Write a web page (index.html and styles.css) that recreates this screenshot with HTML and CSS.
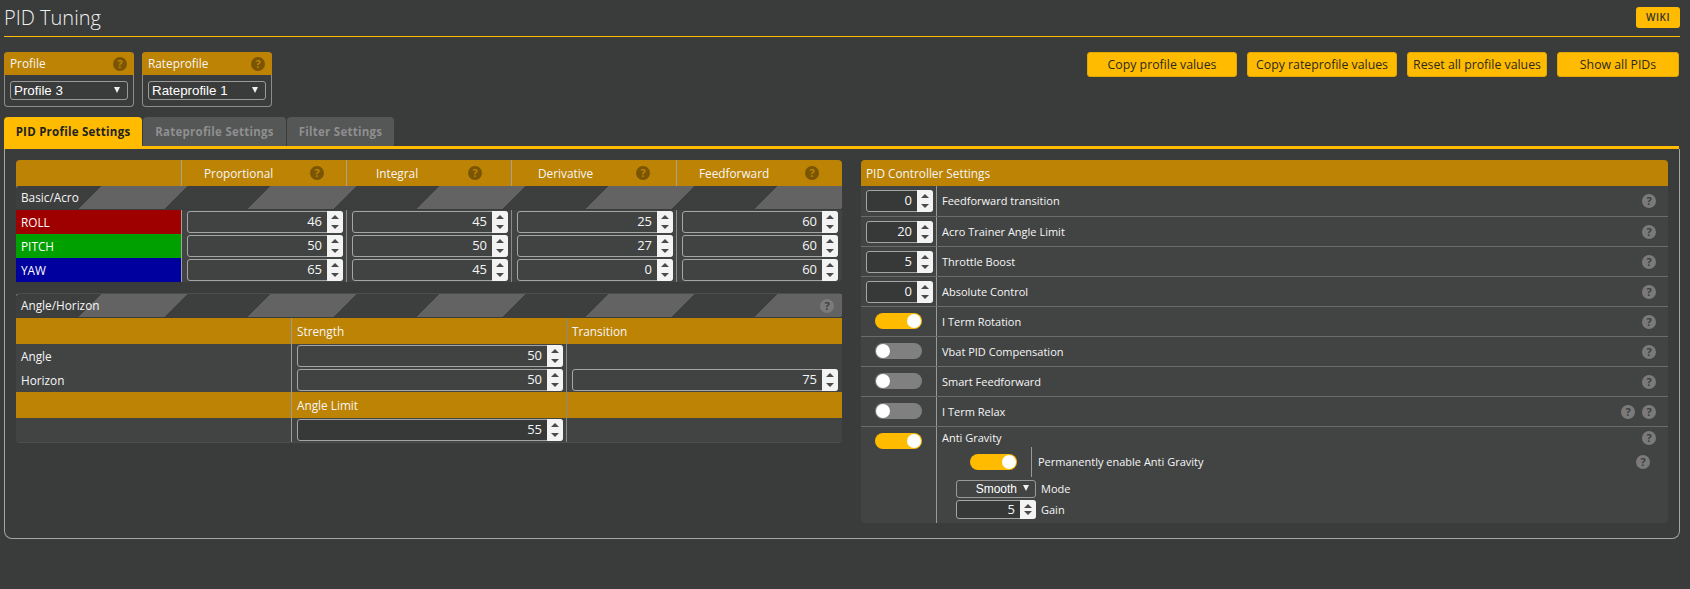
FILE: index.html
```html
<!DOCTYPE html>
<html lang="en">
<head>
<meta charset="utf-8">
<title>PID Tuning</title>
<link rel="stylesheet" href="styles.css">
</head>
<body>
<main class="page">
  <header class="title-bar">
    <h1 class="title">PID Tuning</h1>
    <a class="wiki">WIKI</a>
  </header>

  <section class="toolbar">
    <div class="profiles">
      <div class="profile-box">
        <div class="profile-head"><span>Profile</span><i class="help help-head">?</i></div>
        <div class="profile-body"><div class="select"><span>Profile 3</span></div></div>
      </div>
      <div class="profile-box">
        <div class="profile-head"><span>Rateprofile</span><i class="help help-head">?</i></div>
        <div class="profile-body"><div class="select"><span>Rateprofile 1</span></div></div>
      </div>
    </div>
    <div class="actions">
      <a class="btn btn-a">Copy profile values</a>
      <a class="btn btn-a">Copy rateprofile values</a>
      <a class="btn btn-a">Reset all profile values</a>
      <a class="btn btn-b">Show all PIDs</a>
    </div>
  </section>

  <nav class="tabs">
    <a class="tab tab-on">PID Profile Settings</a>
    <a class="tab tab-2">Rateprofile Settings</a>
    <a class="tab tab-3">Filter Settings</a>
  </nav>

  <section class="content">
    <div class="left">
      <div class="gui pid-table">
        <div class="pid-row pid-head">
          <div class="cell"></div>
          <div class="cell col-p"><span>Proportional</span><i class="help help-head">?</i></div>
          <div class="cell col-i"><span>Integral</span><i class="help help-head">?</i></div>
          <div class="cell col-d"><span>Derivative</span><i class="help help-head">?</i></div>
          <div class="cell col-f"><span>Feedforward</span><i class="help help-head">?</i></div>
        </div>
        <div class="strip"><span>Basic/Acro</span></div>
        <div class="pid-row">
          <div class="axis roll">ROLL</div>
          <div class="cell-in"><div class="num"><span>46</span><b class="spin"></b></div></div>
          <div class="cell-in"><div class="num"><span>45</span><b class="spin"></b></div></div>
          <div class="cell-in"><div class="num"><span>25</span><b class="spin"></b></div></div>
          <div class="cell-in"><div class="num"><span>60</span><b class="spin"></b></div></div>
        </div>
        <div class="pid-row">
          <div class="axis pitch">PITCH</div>
          <div class="cell-in"><div class="num"><span>50</span><b class="spin"></b></div></div>
          <div class="cell-in"><div class="num"><span>50</span><b class="spin"></b></div></div>
          <div class="cell-in"><div class="num"><span>27</span><b class="spin"></b></div></div>
          <div class="cell-in"><div class="num"><span>60</span><b class="spin"></b></div></div>
        </div>
        <div class="pid-row">
          <div class="axis yaw">YAW</div>
          <div class="cell-in"><div class="num"><span>65</span><b class="spin"></b></div></div>
          <div class="cell-in"><div class="num"><span>45</span><b class="spin"></b></div></div>
          <div class="cell-in"><div class="num"><span>0</span><b class="spin"></b></div></div>
          <div class="cell-in"><div class="num"><span>60</span><b class="spin"></b></div></div>
        </div>
      </div>

      <div class="gui angle-table">
        <div class="strip strip-angle"><span>Angle/Horizon</span><i class="help help-row">?</i></div>
        <div class="ang-row ang-head">
          <div class="ang-label"></div>
          <div class="ang-cell">Strength</div>
          <div class="ang-cell">Transition</div>
        </div>
        <div class="ang-row">
          <div class="ang-label">Angle</div>
          <div class="ang-cell"><div class="num"><span>50</span><b class="spin"></b></div></div>
          <div class="ang-cell"></div>
        </div>
        <div class="ang-row">
          <div class="ang-label">Horizon</div>
          <div class="ang-cell"><div class="num"><span>50</span><b class="spin"></b></div></div>
          <div class="ang-cell"><div class="num"><span>75</span><b class="spin"></b></div></div>
        </div>
        <div class="ang-row ang-head">
          <div class="ang-label"></div>
          <div class="ang-cell">Angle Limit</div>
          <div class="ang-cell"></div>
        </div>
        <div class="ang-row">
          <div class="ang-label"></div>
          <div class="ang-cell"><div class="num num-dark"><span>55</span><b class="spin"></b></div></div>
          <div class="ang-cell"></div>
        </div>
      </div>
    </div>

    <div class="gui right">
      <div class="right-head">PID Controller Settings</div>
      <div class="set-row set-first">
        <div class="set-ctl"><div class="num num-dark num-small"><span>0</span><b class="spin"></b></div></div>
        <div class="set-label"><span>Feedforward transition</span><i class="help help-row">?</i></div>
      </div>
      <div class="set-row">
        <div class="set-ctl"><div class="num num-dark num-small"><span>20</span><b class="spin"></b></div></div>
        <div class="set-label"><span>Acro Trainer Angle Limit</span><i class="help help-row">?</i></div>
      </div>
      <div class="set-row">
        <div class="set-ctl"><div class="num num-dark num-small"><span>5</span><b class="spin"></b></div></div>
        <div class="set-label"><span>Throttle Boost</span><i class="help help-row">?</i></div>
      </div>
      <div class="set-row">
        <div class="set-ctl"><div class="num num-dark num-small"><span>0</span><b class="spin"></b></div></div>
        <div class="set-label"><span>Absolute Control</span><i class="help help-row">?</i></div>
      </div>
      <div class="set-row">
        <div class="set-ctl"><b class="toggle toggle-on"></b></div>
        <div class="set-label"><span>I Term Rotation</span><i class="help help-row">?</i></div>
      </div>
      <div class="set-row">
        <div class="set-ctl"><b class="toggle"></b></div>
        <div class="set-label"><span>Vbat PID Compensation</span><i class="help help-row">?</i></div>
      </div>
      <div class="set-row">
        <div class="set-ctl"><b class="toggle"></b></div>
        <div class="set-label"><span>Smart Feedforward</span><i class="help help-row">?</i></div>
      </div>
      <div class="set-row">
        <div class="set-ctl"><b class="toggle"></b></div>
        <div class="set-label"><span>I Term Relax</span><i class="help help-row help-first">?</i><i class="help help-row">?</i></div>
      </div>
      <div class="set-row set-last">
        <div class="set-ctl"><b class="toggle toggle-on"></b></div>
        <div class="set-detail">
          <div class="ag-title"><span>Anti Gravity</span><i class="help help-row">?</i></div>
          <div class="ag-perm">
            <div class="ag-perm-ctl"><b class="toggle toggle-on"></b></div>
            <span>Permanently enable Anti Gravity</span>
            <i class="help help-row">?</i>
          </div>
          <div class="ag-line ag-mode">
            <div class="select select-mode"><span>Smooth</span></div>
            <span>Mode</span>
          </div>
          <div class="ag-line">
            <div class="num num-dark num-gain"><span>5</span><b class="spin"></b></div>
            <span>Gain</span>
          </div>
        </div>
      </div>
    </div>
  </section>
</main>
</body>
</html>
```
FILE: styles.css
```css
* { box-sizing: border-box; }
html, body { margin: 0; padding: 0; }
body {
  width: 1690px; height: 589px; overflow: hidden;
  background: #3a3b3b; color: #f6f6f6;
  font: 500 11.8px/1.2 "Open Sans", sans-serif;
}
.page { padding: 0 10px 0 4px; }
i { font-style: normal; }

.title-bar {
  height: 37px; border-bottom: 1px solid #ffbb00;
  display: flex; justify-content: space-between; align-items: flex-start;
}
.title { margin: 4px 0 0; font-size: 20px; font-weight: 300; line-height: 27px; color: #f0f0f0; }
.wiki {
  margin-top: 7px; width: 44px; height: 21px; border-radius: 3px;
  background: #ffbb00; color: #333; font-size: 10px; font-weight: 600;
  letter-spacing: .5px; text-align: center; line-height: 21px;
}

.toolbar { margin-top: 15px; height: 55px; display: flex; justify-content: space-between; }
.profiles { display: flex; gap: 8px; }
.profile-box { width: 130px; height: 55px; border: 1px solid #8c8c8c; border-top: 0; border-radius: 4px; }
.profile-head {
  height: 23px; margin: 0 -1px; padding: 0 7px 0 6px; background: #bd8304; border-radius: 4px 4px 0 0;
  display: flex; justify-content: space-between; align-items: center;
}
.profile-body { padding: 6px 5px; }
.select {
  position: relative; height: 19px; border: 1px solid #9a9a9a; border-radius: 3px; padding-left: 3px;
  font: 400 13.33px/17px "Liberation Sans", Arial, sans-serif; color: #fff;
}
.select::after {
  content: ""; position: absolute; right: 7px; top: 5px;
  border: 3.5px solid transparent; border-top: 6px solid #f0f0f0; border-bottom: 0;
}

.help {
  display: inline-block; flex: none; width: 14px; height: 14px; border-radius: 50%;
  font: 700 11px/14px "Open Sans", sans-serif; text-align: center;
}
.help-head { background: #7a5503; color: #bd8304; }
.help-row { background: #7a7a7a; color: #3e3e3e; }

.actions { display: flex; gap: 10px; align-items: flex-start; margin-right: 1px; }
.btn {
  height: 25px; border-radius: 3px; background: #ffbb00; color: #2c2a20;
  text-align: center; font-size: 12.3px; font-weight: 400; border: 1px solid #e0a800;
  line-height: 23px;
}
.btn-a { width: 150px; }
.actions .btn-a:nth-child(3) { width: 140px; }
.btn-b { width: 122px; }

.tabs { margin-top: 10px; height: 32px; display: flex; gap: 1px; border-bottom: 3px solid #ffbb00; margin-right: 1px; }
.tab {
  height: 29px; border-radius: 4px 4px 0 0; background: #555656; color: #8f8f8f;
  font-weight: 700; font-size: 11.5px; letter-spacing: .25px; line-height: 29px; text-align: center;
}
.tab-on { width: 138px; background: #ffbb00; color: #222; }
.tab-2 { width: 143px; }
.tab-3 { width: 107px; }

.content {
  height: 390px; padding: 11px 11px 0 11px; margin: 0;
  border: 1px solid #a5a5a5; border-top: 0; border-radius: 0 0 8px 8px;
  display: flex; justify-content: space-between;
}
.left { width: 826px; }
.gui { border-radius: 4px; background: #424444; }

.pid-row { display: grid; grid-template-columns: 166px 165px 165px 165px 165px; height: 24px; }
.pid-head { height: 26px; background: #bd8304; border-radius: 4px 4px 0 0; }
.pid-head .cell { display: flex; align-items: center; height: 26px; position: relative; border-right: 1px solid #a8a290; padding-left: 22px; }
.pid-head .cell:last-child { border-right: 0; }
.pid-head .help { position: absolute; top: 6px; }
.pid-head .col-p .help { left: 128px; }
.pid-head .col-i { padding-left: 29px; }
.pid-head .col-i .help { left: 121px; }
.pid-head .col-d { padding-left: 26px; }
.pid-head .col-d .help { left: 124px; }
.pid-head .col-f .help { left: 128px; }

.strip {
  height: 24px; padding-left: 5px; display: flex; justify-content: space-between; align-items: center;
  border-bottom: 1px solid #3a3b3b;
  background: repeating-linear-gradient(135deg, #636363 0, #636363 2px, #3d3e3e 2px, #3d3e3e 60.7px, #636363 60.7px, #636363 119.5px);
}
.strip-angle { padding-right: 8px; }
.axis { padding: 0 5px; line-height: 24px; color: #fff; border-right: 1px solid #a0a0a0; }
.roll { background: #9e0000; }
.pitch { background: #00a000; }
.yaw { background: #00009e; }
.cell-in { padding: 1px 3px 1px 5px; border-right: 1px solid #8a8a8a; }
.cell-in:last-child { border-right: 0; padding-right: 4px; }

.num {
  position: relative; display: flex; justify-content: flex-end; height: 22px;
  border: 1px solid #a5a5a5; border-radius: 3px; background: #414343;
  font-size: 13px; line-height: 19px; color: #f6f6f6;
}
.num > span { padding-right: 5px; }
.num-dark { background: #373838; }
.spin {
  flex: none; width: 16px; margin: -1px -1px -1px 0; background: #f3f3f3; position: relative;
  border-radius: 0 3px 3px 0;
}
.spin::before, .spin::after {
  content: ""; position: absolute; left: 4px; border: 4px solid transparent;
}
.spin::before { top: 0; border-bottom: 4px solid #4a4a4a; border-top: 0; margin-top: 4px; }
.spin::after { bottom: 0; border-top: 4px solid #4a4a4a; border-bottom: 0; margin-bottom: 4px; }

.angle-table { margin-top: 11px; height: 150px; border-top: 1px solid #4c4d4d; border-bottom: 1px solid #4c4d4d; }
.ang-row { display: grid; grid-template-columns: 276px 275px 275px; height: 24px; }
.ang-head { height: 26px; background: #bd8304; }
.ang-label { padding-left: 5px; border-right: 1px solid #9a9a9a; line-height: 24px; }
.ang-cell { padding: 1px 3px 1px 5px; border-right: 1px solid #8a8a8a; }
.ang-cell:last-child { border-right: 0; padding-right: 4px; }
.ang-head .ang-cell { padding: 0 0 0 5px; line-height: 26px; }

.right { width: 807px; height: 363px; }
.right-head {
  height: 26px; padding-left: 5px; line-height: 26px; background: #bd8304;
  border-radius: 4px 4px 0 0;
}
.set-row { display: flex; height: 30px; border-bottom: 1px solid #6a6b6b; font-size: 11px; }
.set-first { height: 31px; }
.set-last { height: 96px; border-bottom: 0; }
.set-ctl { width: 76px; flex: none; border-right: 1px solid #9a9a9a; padding: 4px 0 0 5px; }
.set-label { flex: 1; display: flex; align-items: center; padding: 0 12px 0 5px; gap: 7px; }
.set-label > span { flex: 1; }
.num-small { width: 67px; }
.toggle {
  position: relative; display: block; width: 47px; height: 16px; border-radius: 8px; background: #808080;
}
.set-ctl > .toggle { margin: 2px 0 0 9px; }
.toggle::after {
  content: ""; position: absolute; left: 1px; top: 1px; width: 14px; height: 14px; border-radius: 50%; background: #fff;
}
.toggle-on { background: #ffbb00; }
.toggle-on::after { left: 32px; }

.set-detail { flex: 1; padding: 0 12px 0 5px; }
.ag-title { display: flex; justify-content: space-between; align-items: center; height: 20px; padding-top: 2px; }
.ag-perm { display: flex; align-items: center; height: 30px; margin-left: -5px; padding-right: 6px; }
.ag-perm > span { flex: 1; padding-left: 6px; }
.ag-perm-ctl { width: 95px; height: 30px; border-right: 1px solid #9a9a9a; display: flex; align-items: center; padding-left: 33px; }
.ag-line { display: flex; align-items: center; gap: 5px; margin-left: 14px; height: 19px; }
.ag-mode { height: 18px; margin-top: 3px; margin-bottom: 2px; }
.select-mode { width: 80px; height: 18px; text-align: right; padding-right: 18px; font-size: 12px; line-height: 16px; }
.select-mode::after { right: 6px; top: 4px; }
.num-gain { width: 80px; height: 19px; line-height: 16px; }
.num-gain > span { padding-right: 5px; }
```
